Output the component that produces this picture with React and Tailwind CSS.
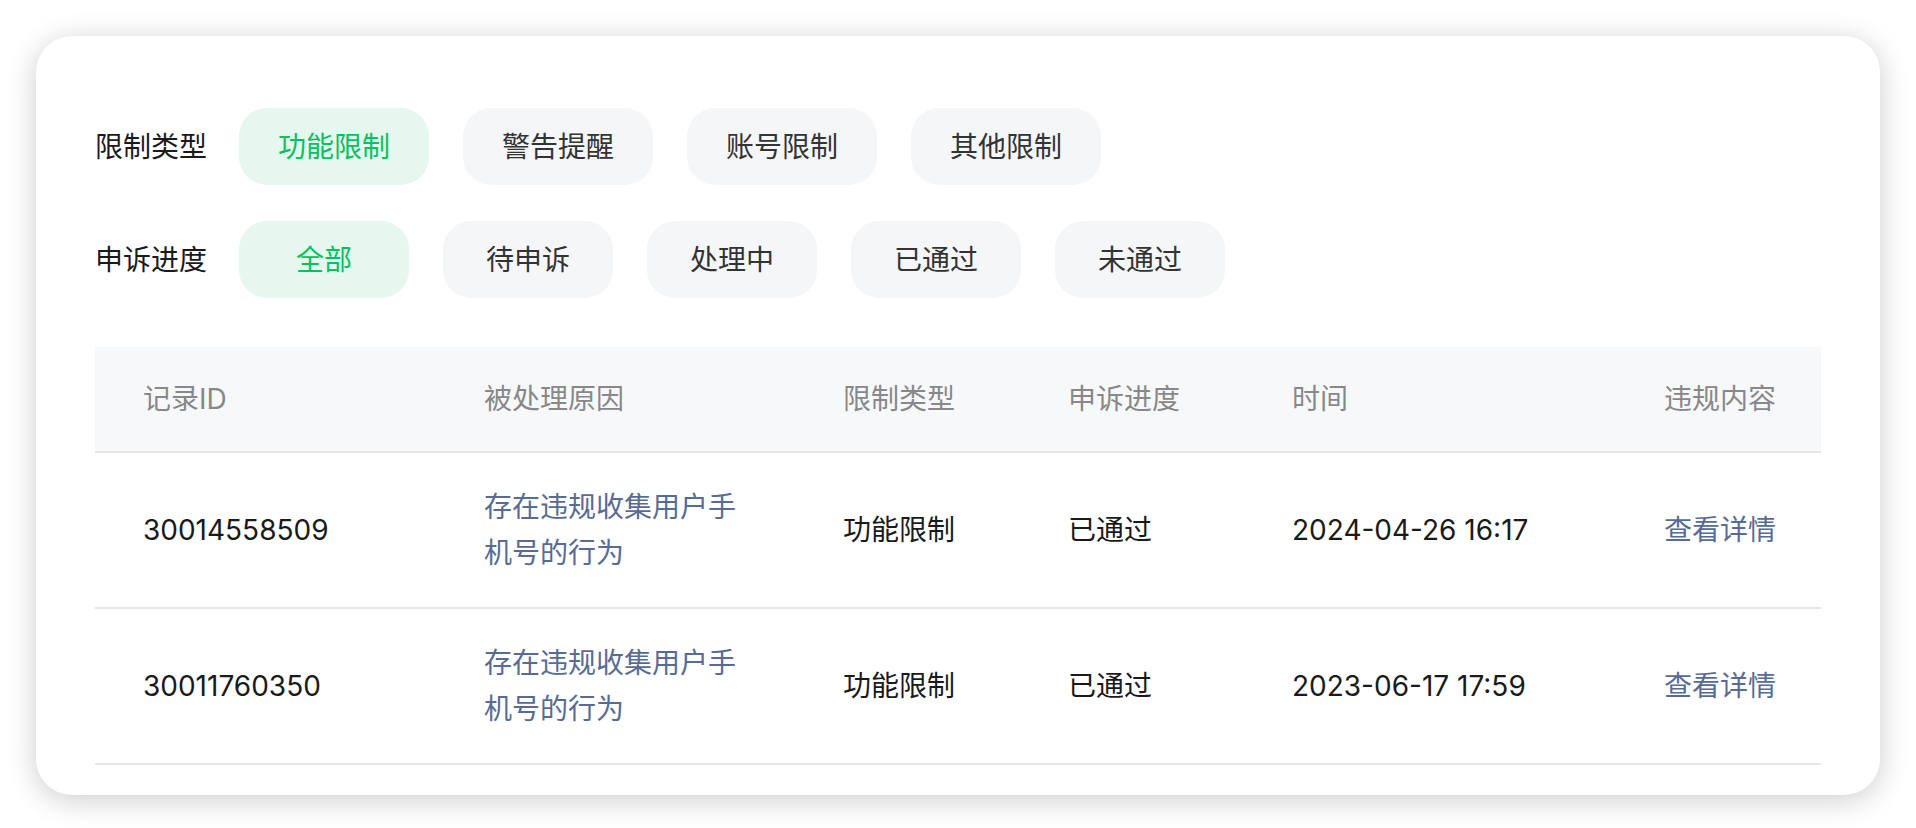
import { useState } from 'react'

const typeOptions = ['功能限制', '警告提醒', '账号限制', '其他限制']
const progressOptions = ['全部', '待申诉', '处理中', '已通过', '未通过']

const records = [
  { id: '30014558509', reason: '存在违规收集用户手机号的行为', type: '功能限制', progress: '已通过', time: '2024-04-26 16:17' },
  { id: '30011760350', reason: '存在违规收集用户手机号的行为', type: '功能限制', progress: '已通过', time: '2023-06-17 17:59' },
]

const cols = 'grid grid-cols-[341px_359px_225px_224px_372px_1fr] items-center pl-[48px]'

function Chip({ label, active, onClick }) {
  return (
    <button
      onClick={onClick}
      className={`h-[77px] min-w-[170px] px-[39px] rounded-[28px] flex items-center justify-center text-[28px] cursor-pointer ${
        active ? 'bg-[#e5f7ee] text-[#07c160]' : 'bg-[#f5f6f7] text-[#333333]'
      }`}
    >
      {label}
    </button>
  )
}

function FilterRow({ title, options, value, onChange }) {
  return (
    <div className="flex items-center gap-[34px]">
      <span className="w-[110px] text-[28px] text-[#1a1a1a] whitespace-nowrap">{title}</span>
      {options.map(opt => (
        <Chip key={opt} label={opt} active={opt === value} onClick={() => onChange(opt)} />
      ))}
    </div>
  )
}

export default function App() {
  const [type, setType] = useState('功能限制')
  const [progress, setProgress] = useState('全部')

  return (
    <div className="min-h-screen bg-white px-[36px] pt-[36px] font-['Inter','Noto_Sans_CJK_SC',sans-serif]">
      <div className="bg-white rounded-[36px] shadow-[0_5px_30px_rgba(0,0,0,0.2)] pt-[72px] pb-[30px] px-[59px]">
        {/* Filters */}
        <div className="flex flex-col gap-[36px]">
          <FilterRow title="限制类型" options={typeOptions} value={type} onChange={setType} />
          <FilterRow title="申诉进度" options={progressOptions} value={progress} onChange={setProgress} />
        </div>

        {/* Table */}
        <div className="mt-[49px] text-[28px]">
          <div className={`${cols} h-[106px] bg-[#f7f8fa] border-b-2 border-[#e6e6e6] text-[#888888]`}>
            <span>记录ID</span>
            <span>被处理原因</span>
            <span>限制类型</span>
            <span>申诉进度</span>
            <span>时间</span>
            <span>违规内容</span>
          </div>
          {records.map(r => (
            <div key={r.id} className={`${cols} h-[156px] border-b-2 border-[#e6e6e6] text-[#1a1a1a]`}>
              <span>{r.id}</span>
              <span className="w-[260px] leading-[46px] text-[#576b95]">{r.reason}</span>
              <span>{r.type}</span>
              <span>{r.progress}</span>
              <span>{r.time}</span>
              <span className="text-[#576b95] cursor-pointer">查看详情</span>
            </div>
          ))}
        </div>
      </div>
    </div>
  )
}
